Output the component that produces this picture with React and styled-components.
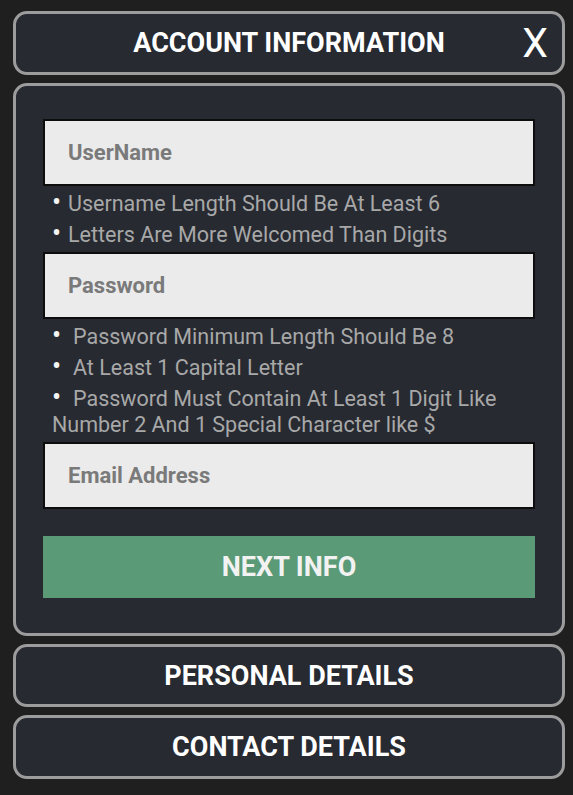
import styled, { createGlobalStyle } from "styled-components";

const GlobalStyle = createGlobalStyle`
    html, body {
        margin: 0;
        padding: 0;
        background: #1f1f1f;
    }
    * {
        box-sizing: border-box;
    }
`;

const Page = styled.div`
    display: flex;
    flex-direction: column;
    gap: 8px;
    padding: 11px 8px 0 13px;
    font-family: Roboto, "Liberation Sans", sans-serif;
`;

const Panel = styled.div`
    background: #272a31;
    border: 3px solid #9c9c9c;
    border-radius: 14px;
`;

const HeaderBar = styled(Panel)`
    height: ${(props) => props.$height || 64}px;
    display: grid;
    grid-template-columns: 1fr auto 1fr;
    align-items: center;
    padding: 0 14px;
`;

const Title = styled.h2`
    grid-column: 2;
    margin: 0;
    color: #ffffff;
    font-size: 27px;
    font-weight: 700;
    white-space: nowrap;
    text-transform: uppercase;
`;

const CloseButton = styled.button`
    grid-column: 3;
    justify-self: end;
    background: none;
    border: none;
    padding: 0;
    color: #ffffff;
    font-family: Roboto, "Liberation Sans", sans-serif;
    font-size: 41px;
    font-weight: 400;
    line-height: 1;
    cursor: pointer;
`;

const Body = styled(Panel)`
    height: 553px;
    padding: 33px 27px 0;
    display: flex;
    flex-direction: column;
`;

const Field = styled.input`
    display: block;
    width: 100%;
    height: 67px;
    background: #ebebeb;
    border: 2px solid #0d0d0d;
    padding: 0 23px;
    font-family: Roboto, "Liberation Sans", sans-serif;
    font-size: 22px;
    font-weight: 700;
    color: #333;
    outline: none;
    &::placeholder {
        color: #7a7a7a;
        opacity: 1;
    }
`;

const Hints = styled.ul`
    list-style: none;
    margin: 0;
    padding: 5px 0 4px 9px;
    display: flex;
    flex-direction: column;
    gap: 5px;
`;

const Hint = styled.li`
    color: #a8a8a8;
    font-size: 21.5px;
    line-height: 26px;
`;

const Bullet = styled.span`
    display: inline-block;
    width: ${(props) => props.$width}px;
    color: #f4f4f4;
    font-size: 27px;
    line-height: 26px;
    vertical-align: top;
    position: relative;
    top: -2px;
`;

const NextButton = styled.button`
    margin-top: 27px;
    height: 62px;
    width: 100%;
    border: none;
    background: #5a9a76;
    color: #f2f2f2;
    font-family: Roboto, "Liberation Sans", sans-serif;
    font-size: 27px;
    font-weight: 700;
    text-transform: uppercase;
    cursor: pointer;
`;

const usernameHints = [
    "Username Length Should Be At Least 6",
    "Letters Are More Welcomed Than Digits",
];

const passwordHints = [
    "Password Minimum Length Should Be 8",
    "At Least 1 Capital Letter",
    "Password Must Contain At Least 1 Digit Like Number 2 And 1 Special Character like $",
];

function HintList({ items, bulletWidth }) {
    return (
        <Hints>
            {items.map((text) => (
                <Hint key={text}>
                    <Bullet $width={bulletWidth}>•</Bullet>
                    {text}
                </Hint>
            ))}
        </Hints>
    );
}

export default function App() {
    return (
        <>
            <GlobalStyle />
            <Page>
                <HeaderBar>
                    <Title>Account Information</Title>
                    <CloseButton type="button">X</CloseButton>
                </HeaderBar>
                <Body>
                    <Field type="text" placeholder="UserName" />
                    <HintList items={usernameHints} bulletWidth={16} />
                    <Field type="password" placeholder="Password" />
                    <HintList items={passwordHints} bulletWidth={21} />
                    <Field type="email" placeholder="Email Address" />
                    <NextButton type="button">Next Info</NextButton>
                </Body>
                <HeaderBar $height={63}>
                    <Title>Personal Details</Title>
                </HeaderBar>
                <HeaderBar>
                    <Title>Contact Details</Title>
                </HeaderBar>
            </Page>
        </>
    );
}
